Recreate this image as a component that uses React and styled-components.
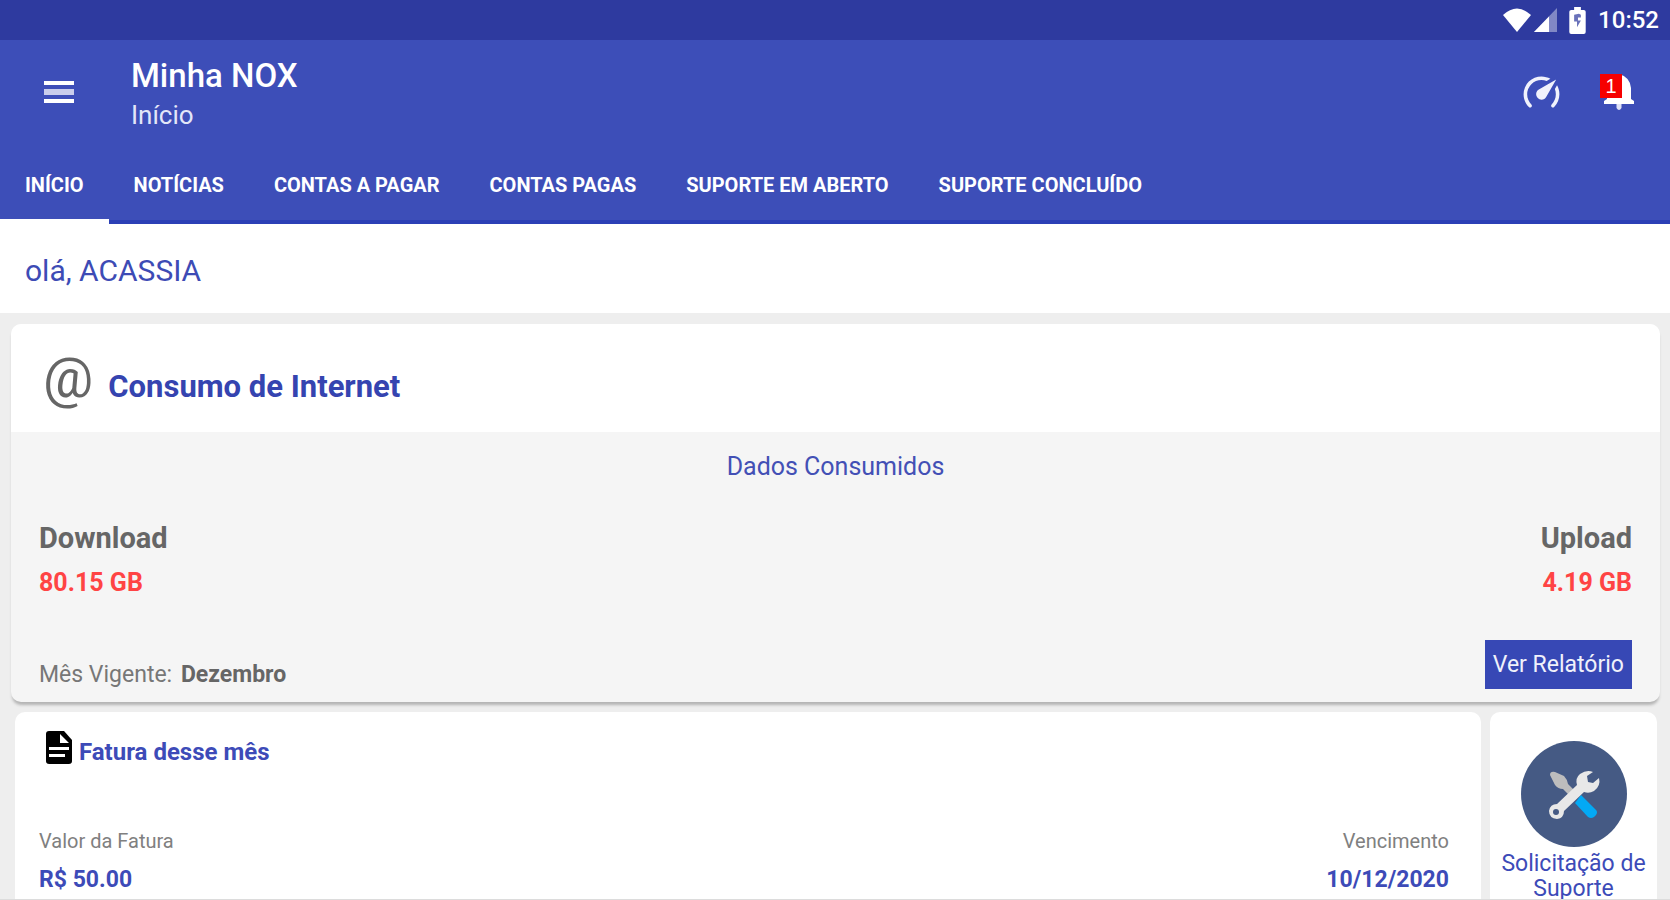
import React from 'react';
import styled, { createGlobalStyle } from 'styled-components';

const GlobalStyle = createGlobalStyle`
  * {
    box-sizing: border-box;
  }
  body {
    margin: 0;
    font-family: Roboto, 'Liberation Sans', sans-serif;
    background: #eee;
  }
  h1, h2, p, dl, dt, dd {
    margin: 0;
  }
`;

const Screen = styled.div`
  display: flex;
  flex-direction: column;
  height: 100vh;
  overflow: hidden;
  border-bottom: 1px solid #dcdcdc;
`;

const StatusBar = styled.div`
  display: flex;
  flex: none;
  align-items: center;
  justify-content: flex-end;
  height: 40px;
  padding-right: 11px;
  background: #2e3a9f;
  color: #fff;
  font-size: 24px;
  font-weight: 500;
  svg {
    margin-right: 12px;
  }
  svg:first-child {
    margin-right: 2px;
  }
`;

const AppBar = styled.header`
  flex: none;
  background: #3d4eb8;
  color: #fff;
`;

const Toolbar = styled.div`
  display: flex;
  align-items: center;
  height: 104px;
  padding: 0 28px 0 36px;
`;

const IconButton = styled.button`
  position: relative;
  display: flex;
  align-items: center;
  justify-content: center;
  width: 46px;
  height: 46px;
  padding: 0;
  border: 0;
  background: none;
  color: #fff;
`;

const Titles = styled.div`
  flex: 1;
  padding: 6px 0 0 49px;
  h1 {
    font-size: 33px;
    line-height: 40px;
    font-weight: 500;
  }
  p {
    font-size: 26px;
    line-height: 38px;
    color: #e3e6f8;
  }
`;

const Actions = styled.div`
  display: flex;
  gap: 32px;
`;

const Badge = styled.span`
  position: absolute;
  left: 4px;
  top: 5px;
  width: 22px;
  height: 24px;
  background: #f60000;
  font-size: 20px;
  line-height: 24px;
  text-align: center;
`;

const Tabs = styled.nav`
  display: flex;
  height: 80px;
  border-bottom: 4px solid #2c40b6;
`;

const Tab = styled.a`
  display: flex;
  align-items: center;
  height: 80px;
  padding: 6px 25px 0;
  border-bottom: 5px solid ${props => (props.$active ? '#fff' : 'transparent')};
  color: #fff;
  font-size: 20px;
  font-weight: 700;
  text-decoration: none;
  white-space: nowrap;
`;

const Greeting = styled.p`
  flex: none;
  padding: 29px 25px 24px;
  background: #fff;
  color: #3d4bb5;
  font-size: 30px;
  line-height: 36px;
`;

const Content = styled.main`
  display: flex;
  flex: 1;
  flex-direction: column;
  gap: 10px;
  min-height: 0;
  padding: 11px 10px 0 11px;
`;

const Card = styled.section`
  flex: none;
  border-radius: 10px;
  overflow: hidden;
  background: #f5f5f5;
  box-shadow: 0 4px 3px -1px #b4b4b4;
`;

const CardHeader = styled.div`
  display: flex;
  align-items: center;
  gap: 15px;
  height: 108px;
  padding: 0 32px;
  background: #fff;
  color: #3544b0;
  h2 {
    padding-top: 16px;
    font-size: 31px;
    font-weight: 700;
  }
`;

const AtSign = styled.span`
  color: #666;
  font-size: 56px;
`;

const CardBody = styled.div`
  padding: 17px 28px 13px;
`;

const Caption = styled.p`
  color: #4350b5;
  font-size: 25px;
  line-height: 36px;
  text-align: center;
`;

const Usage = styled.dl`
  display: flex;
  justify-content: space-between;
  padding-top: 33px;
  dt {
    color: #666;
    font-size: 29px;
    line-height: 40px;
    font-weight: 700;
  }
  dd {
    color: #ff4444;
    font-size: 25px;
    line-height: 50px;
    font-weight: 700;
  }
`;

const Amount = styled.div`
  text-align: ${props => (props.$end ? 'right' : 'left')};
`;

const CardFooter = styled.div`
  display: flex;
  align-items: flex-end;
  justify-content: space-between;
  padding-top: 32px;
  color: #777;
  font-size: 23px;
  line-height: 28px;
  strong {
    margin-left: 3px;
    color: #666;
  }
`;

const ReportButton = styled.button`
  height: 49px;
  padding: 0 8px;
  border: 0;
  background: #3748b5;
  color: #f0f1fb;
  font-family: inherit;
  font-size: 23px;
`;

const Row = styled.div`
  display: flex;
  flex: 1;
  gap: 9px;
  padding: 0 3px 0 4px;
`;

const Tile = styled.section`
  border-radius: 10px 10px 0 0;
  background: #fff;
`;

const Invoice = styled(Tile)`
  flex: 1;
  padding: 16px 32px 0 24px;
`;

const InvoiceTitle = styled.h2`
  display: flex;
  align-items: flex-start;
  height: 94px;
  color: #3d4bb8;
  font-size: 24px;
  line-height: 48px;
  font-weight: 700;
  svg {
    margin-right: 2px;
  }
`;

const InvoiceData = styled.dl`
  display: flex;
  justify-content: space-between;
  dt {
    color: #808080;
    font-size: 20px;
    line-height: 38px;
  }
  dd {
    color: #3d4bb8;
    font-size: 23px;
    line-height: 40px;
    font-weight: 700;
  }
`;

const Support = styled(Tile)`
  width: 167px;
  a {
    display: flex;
    flex-direction: column;
    align-items: center;
    gap: 4px;
    padding: 29px 8px 0;
    color: #3d4bb8;
    font-size: 23px;
    line-height: 25px;
    text-align: center;
    text-decoration: none;
  }
`;

const WifiIcon = () => (
  <svg width="30" height="24" viewBox="0 0 30 24" fill="#fff">
    <path d="M15 24 L1 7 Q15 -6 29 7 Z" />
  </svg>
);

const SignalIcon = () => (
  <svg width="23" height="24" viewBox="0 0 23 24" fill="#fff">
    <path d="M23 0 V24 H0 Z" opacity="0.4" />
    <path d="M15 8.500 V24 H0 Z" />
  </svg>
);

const BatteryIcon = () => (
  <svg width="17" height="27" viewBox="0 0 17 28">
    <path d="M5 0 H12 V3 H15 Q17 3 17 5 V26 Q17 28 15 28 H2 Q0 28 0 26 V5 Q0 3 2 3 H5 Z" fill="#fff" />
    <path d="M10 7 L5 8 V15 H8 V21 L12 14 H9 V11 H12 V8 Z" fill="#6a72ba" />
  </svg>
);

const MenuIcon = () => (
  <svg width="32" height="24" viewBox="0 0 32 24">
    <path d="M1 1 H31 V5 H1 Z M1 19 H31 V23 H1 Z" fill="#fff" />
    <path d="M1 9 H31 V15 H1 Z" fill="#c9cdec" />
  </svg>
);

const GaugeIcon = () => (
  <svg width="43" height="43" viewBox="0 0 24 24" fill="#f1f2fc">
    <path d="M12,16A3,3 0 0,1 9,13C9,11.88 9.61,10.9 10.5,10.39L20.21,4.77L14.68,14.35C14.18,15.33 13.17,16 12,16M12,3C13.81,3 15.5,3.5 16.97,4.32L14.87,5.53C14,5.19 13,5 12,5A8,8 0 0,0 4,13C4,15.21 4.89,17.21 6.34,18.65H6.35C6.74,19.04 6.74,19.67 6.35,20.06C5.96,20.45 5.32,20.45 4.93,20.07C3.12,18.26 2,15.76 2,13A10,10 0 0,1 12,3M22,13C22,15.76 20.88,18.26 19.07,20.07C18.68,20.45 18.05,20.45 17.66,20.06C17.27,19.67 17.27,19.04 17.66,18.65C19.11,17.2 20,15.21 20,13C20,12 19.81,11 19.46,10.1L20.67,8C21.5,9.5 22,11.18 22,13Z" />
  </svg>
);

const BellIcon = () => (
  <svg width="30" height="36" viewBox="0 0 30 36" fill="#fff">
    <path d="M15 0 Q26 3 27 14 V25 L30 27 V30 H0 V27 L3 25 V14 Q4 3 15 0 Z" />
    <path d="M12.500 30 H17.500 V34 Q15 38 12.500 34 Z" fill="#dfe2f6" />
  </svg>
);

const DocumentIcon = () => (
  <svg width="38" height="38" viewBox="0 0 38 38">
    <path d="M10 3 H25 L33 12 V33 Q33 36 30 36 H10 Q7 36 7 33 V6 Q7 3 10 3 Z" fill="#000" />
    <path d="M21 6 L30 15 H21 Z M10 19 H30 V22 H10 Z M10 26 H26 V29 H10 Z" fill="#fff" />
  </svg>
);

const ToolsIcon = () => (
  <svg width="106" height="106" viewBox="0 0 106 106">
    <circle cx="53" cy="53" r="53" fill="#455a84" />
    <path d="M29 34 Q29 30 34 31 L43 35 Q46 38 47 43 L58 54 L53 59 L42 48 Q37 48 34 44 Z" fill="#bdbdbd" />
    <path d="M60 54 L75 69 Q77 71 75 74 L73 76 Q70 78 67 76 L54 62 Z" fill="#03a9f4" />
    <path
      d="M72 31 L66 35 L67 41 L72 42 L78 37 Q80 45 73 50 Q68 53 63 51 L43 70 Q43 77 36 78 Q28 77 28 70 Q29 63 36 63 L56 44 Q54 37 59 33 Q66 28 72 31 Z"
      fill="#e8e8e8"
    />
    <circle cx="35" cy="71" r="3" fill="#455a84" />
  </svg>
);

const tabs = [
  'INÍCIO',
  'NOTÍCIAS',
  'CONTAS A PAGAR',
  'CONTAS PAGAS',
  'SUPORTE EM ABERTO',
  'SUPORTE CONCLUÍDO'
];

const App = () => (
  <Screen>
    <GlobalStyle />
    <StatusBar>
      <WifiIcon />
      <SignalIcon />
      <BatteryIcon />
      <span>10:52</span>
    </StatusBar>
    <AppBar>
      <Toolbar>
        <IconButton aria-label="Menu">
          <MenuIcon />
        </IconButton>
        <Titles>
          <h1>Minha NOX</h1>
          <p>Início</p>
        </Titles>
        <Actions>
          <IconButton aria-label="Velocidade">
            <GaugeIcon />
          </IconButton>
          <IconButton aria-label="Notificações">
            <BellIcon />
            <Badge>1</Badge>
          </IconButton>
        </Actions>
      </Toolbar>
      <Tabs>
        {tabs.map((tab, i) => (
          <Tab key={tab} href="#" $active={i === 0}>{tab}</Tab>
        ))}
      </Tabs>
    </AppBar>
    <Greeting>olá, ACASSIA</Greeting>
    <Content>
      <Card>
        <CardHeader>
          <AtSign>@</AtSign>
          <h2>Consumo de Internet</h2>
        </CardHeader>
        <CardBody>
          <Caption>Dados Consumidos</Caption>
          <Usage>
            <Amount>
              <dt>Download</dt>
              <dd>80.15 GB</dd>
            </Amount>
            <Amount $end>
              <dt>Upload</dt>
              <dd>4.19 GB</dd>
            </Amount>
          </Usage>
          <CardFooter>
            <span>Mês Vigente: <strong>Dezembro</strong></span>
            <ReportButton>Ver Relatório</ReportButton>
          </CardFooter>
        </CardBody>
      </Card>
      <Row>
        <Invoice>
          <InvoiceTitle>
            <DocumentIcon />
            Fatura desse mês
          </InvoiceTitle>
          <InvoiceData>
            <Amount>
              <dt>Valor da Fatura</dt>
              <dd>R$ 50.00</dd>
            </Amount>
            <Amount $end>
              <dt>Vencimento</dt>
              <dd>10/12/2020</dd>
            </Amount>
          </InvoiceData>
        </Invoice>
        <Support>
          <a href="#">
            <ToolsIcon />
            Solicitação de Suporte
          </a>
        </Support>
      </Row>
    </Content>
  </Screen>
);

export default App;
